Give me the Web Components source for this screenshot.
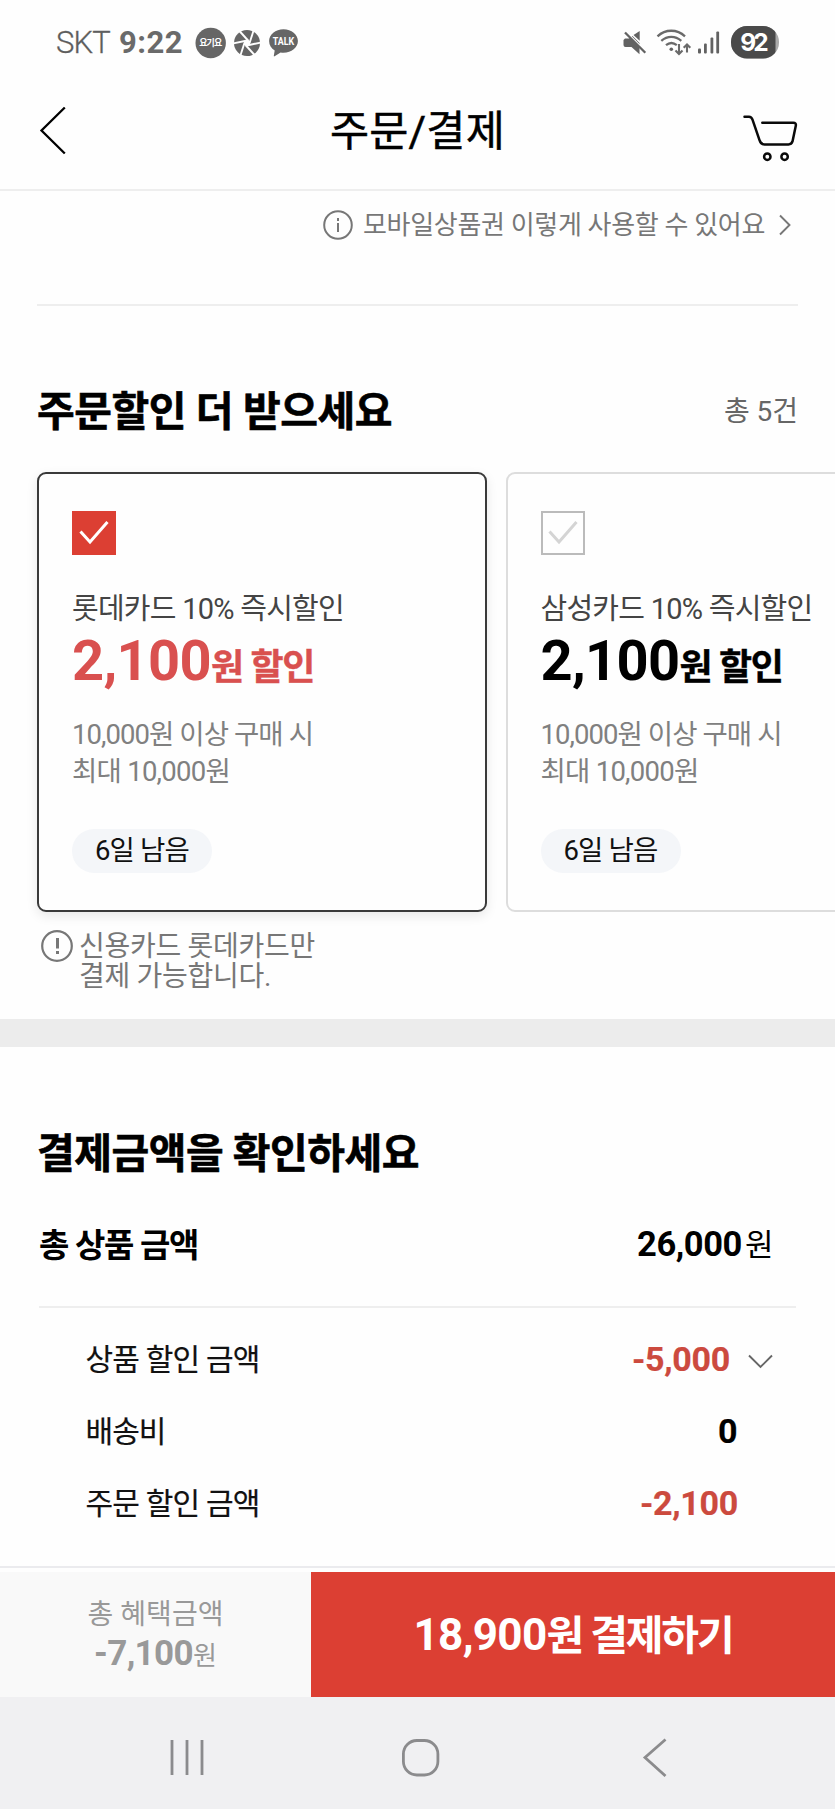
<!DOCTYPE html>
<html lang="ko">
<head>
<meta charset="utf-8">
<title>주문/결제</title>
<style>
  body { margin: 0; background: #fefefe; font-family: Roboto, "Noto Sans CJK KR", sans-serif; color: #111; }
</style>
</head>
<body>
<order-app></order-app>
<script>
const define = (name, html, init) => {
  const tpl = document.createElement('template');
  tpl.innerHTML = html;
  customElements.define(name, class extends HTMLElement {
    connectedCallback() {
      if (this.shadowRoot) return;
      this.attachShadow({ mode: 'open' }).appendChild(tpl.content.cloneNode(true));
      if (init) init(this);
    }
  });
};

define('order-app', `
  <style>
    :host { display: flex; flex-direction: column; width: 835px; height: 1809px; overflow: hidden; }
    .band { height: 28px; background: #ececec; flex: none; }
  </style>
  <status-bar></status-bar>
  <top-bar></top-bar>
  <voucher-link></voucher-link>
  <discount-section></discount-section>
  <div class="band"></div>
  <amount-section></amount-section>
  <pay-bar></pay-bar>
  <nav-bar></nav-bar>
`);

define('status-bar', `
  <style>
    :host { display: flex; justify-content: space-between; align-items: center; height: 85px; flex: none;
      box-sizing: border-box; padding: 0 56px 0 56px; color: #6d6d6d; font-size: 31px; line-height: 36px; }
    div { display: flex; align-items: center; }
    svg { display: block; flex: none; }
    .skt { font-weight: 300; margin-right: 9px; color: #5c5c5c; -webkit-text-stroke: .3px #666; }
    .time { font-weight: 700; margin-right: 11px; color: #6a6a6a; }
  </style>
  <div>
    <fit-text class="skt" w="54">SKT</fit-text>
    <fit-text class="time" w="64">9:22</fit-text>
    <svg width="104" height="36" viewBox="194 25 104 36">
      <circle cx="210.700" cy="43" r="15.200" fill="#666"/>
      <text x="210.700" y="46.300" text-anchor="middle" textLength="23" font-family="Noto Sans CJK KR" font-size="9" font-weight="700" fill="#fff">요기요</text>
      <circle cx="247" cy="43" r="13" fill="#666"/>
      <g stroke="#fefefe" stroke-width="1.900" fill="none">
        <path d="M239 30.500 248.500 41"/>
        <path d="M239 30.500 248.500 41" transform="rotate(60 247 43)"/>
        <path d="M239 30.500 248.500 41" transform="rotate(120 247 43)"/>
        <path d="M239 30.500 248.500 41" transform="rotate(180 247 43)"/>
        <path d="M239 30.500 248.500 41" transform="rotate(240 247 43)"/>
        <path d="M239 30.500 248.500 41" transform="rotate(300 247 43)"/>
      </g>
      <path d="M247 39.500 250 41.300v3.500L247 46.500 244 44.700V41.300Z" fill="#fefefe"/>
      <path d="M283.500 29.300c8 0 14.400 5.200 14.400 11.800s-6.400 11.700-14.400 11.700c-1 0-2-.1-2.900-.2l-6 3.700c-.6.300-.9 0-.8-.6l.9-5.200c-3.400-2-5.600-5.400-5.600-9.400 0-6.600 6.400-11.800 14.400-11.800Z" fill="#666"/>
      <text x="283.500" y="44.700" text-anchor="middle" textLength="21.500" lengthAdjust="spacingAndGlyphs" font-family="Roboto" font-size="10" font-weight="700" fill="#fff">TALK</text>
    </svg>
  </div>
  <div>
    <svg width="158" height="36" viewBox="621 25 158 36">
      <g fill="#626262">
        <path d="M625 38.500h4l3.500-2.500 7 7v11.200L631.500 47H625.500a2 2 0 0 1-2-2v-5Z"/>
        <path d="M633.500 35 639.700 31v9.700Z"/>
        <path d="M626.500 32.500 646.300 52.300" stroke="#fefefe" stroke-width="2" fill="none"/>
        <path d="M625 32.500 645.300 52.800" stroke="#626262" stroke-width="2.300" fill="none"/>
        <circle cx="671.300" cy="49.200" r="1.800"/>
        <rect x="698" y="48.500" width="3" height="5" rx="1"/><rect x="704" y="43.500" width="2.800" height="10" rx="1"/>
        <rect x="710.500" y="37.500" width="2.800" height="16" rx="1"/><rect x="716.300" y="31.500" width="2.800" height="22" rx="1"/>
      </g>
      <g fill="none" stroke="#6a6a6a" stroke-width="2.300">
        <path d="M657.500 36.300c8-7.400 19.500-7.400 27.500 0M661.300 40.800c6-5.300 14-5.300 20 0M666 45.200c3.300-2.700 7.500-2.700 10.800 0"/>
        <path d="M679 44v9.500M675.500 50.500l3.500 3.500 3.500-3.500M687 52.500v-8M683.700 47.800l3.300-3.300 3.300 3.300" stroke-width="2.100"/>
      </g>
      <clipPath id="cell"><rect x="731" y="26" width="48" height="32.500" rx="16"/></clipPath>
      <g clip-path="url(#cell)">
        <rect x="731" y="26" width="48" height="33" fill="#aaa"/>
        <rect x="731" y="26" width="44.500" height="33" fill="#4a4a4a"/>
      </g>
      <text x="754.500" y="51" text-anchor="middle" textLength="28.500" font-family="Inter" font-size="24.500" font-weight="700" fill="#fff">92</text>
    </svg>
  </div>
`);

define('top-bar', `
  <style>
    :host { display: grid; grid-template-columns: 60px 1fr 60px; align-items: center; height: 106px; flex: none;
      box-sizing: border-box; padding: 0 36px; border-bottom: 2.500px solid #eee; }
    h1 { margin: 0 0 10px; font-size: 42.500px; line-height: 50px; font-weight: 400; color: #000; text-align: center; -webkit-text-stroke: .5px #000; }
    svg { display: block; }
    .back { margin-bottom: 4px; }
    .cart { margin-top: 4px; }
  </style>
  <svg class="back" width="40" height="60" viewBox="36 105 40 60"><path d="M64.800 107.500 41.500 130.500 64.800 153.500" fill="none" stroke="#000" stroke-width="2.300"/></svg>
  <h1><fit-text w="175">주문/결제</fit-text></h1>
  <svg class="cart" width="60" height="60" viewBox="739 109 60 60" fill="none" stroke="#0a0a0a" stroke-width="2.500" stroke-linecap="round" stroke-linejoin="round">
    <path d="M744.500 116.700h4.500q2.500 0 3.500 3l7 20.500q1.300 4.200 5 4.200h24q3 0 4-3l3.300-15.700q.6-3-2.500-3h-31"/>
    <circle cx="767.300" cy="156.700" r="3.200"/><circle cx="784.600" cy="156.700" r="3.200"/>
  </svg>
`);

define('voucher-link', `
  <style>
    :host { display: flex; flex-direction: column; flex: none; height: 115px; box-sizing: border-box; margin: 0 37px; border-bottom: 2px solid #eee; }
    a { display: flex; align-items: center; justify-content: flex-end; margin-top: 16px; height: 36px; color: #777; font-size: 26px; line-height: 36px; }
    .i { margin-right: 10px; } .c { margin: 0 7px 0 14px; }
    svg { display: block; }
  </style>
  <a>
    <svg class="i" width="30" height="30" viewBox="0 0 30 30" fill="none" stroke="#777" stroke-width="2"><circle cx="15" cy="15" r="13.800"/><path d="M15 13v9M15 8v3"/></svg>
    <fit-text w="402">모바일상품권 이렇게 사용할 수 있어요</fit-text>
    <svg class="c" width="12" height="22" viewBox="0 0 12 22" fill="none" stroke="#777" stroke-width="1.900"><path d="M1 1.500 10.500 11 1 20.500"/></svg>
  </a>
`);

define('discount-section', `
  <style>
    :host { display: block; flex: none; height: 713px; box-sizing: border-box; padding: 81px 0 0 37px; }
    header { display: flex; justify-content: space-between; align-items: center; height: 50px; margin: 0 37px 35px 0; }
    h2 { margin: 0; font-size: 41px; line-height: 50px; font-weight: 700; color: #000; -webkit-text-stroke: .6px #000; }
    .n { font-size: 28px; line-height: 40px; color: #666; }
    .cards { display: flex; gap: 19px; overflow: visible; }
    .note { display: flex; gap: 6px; margin: 18px 0 0 4px; color: #777; font-size: 28px; line-height: 30px; }
    .note svg { display: block; flex: none; }
    .note p { margin: 2px 0 0; display: flex; flex-direction: column; align-items: flex-start; }
  </style>
  <header><h2><fit-text w="355">주문할인 더 받으세요</fit-text></h2><fit-text class="n" w="74">총 5건</fit-text></header>
  <div class="cards">
    <coupon-card checked><fit-text w="272">롯데카드 10% 즉시할인</fit-text></coupon-card>
    <coupon-card><fit-text w="272">삼성카드 10% 즉시할인</fit-text></coupon-card>
  </div>
  <div class="note">
    <svg width="32" height="32" viewBox="0 0 32 32" fill="none" stroke="#777" stroke-width="2.200"><circle cx="16" cy="16" r="14.800"/><path d="M16.500 8v10.500M16.500 21v3" stroke-width="3"/></svg>
    <p><fit-text w="236">신용카드 롯데카드만</fit-text><fit-text w="192">결제 가능합니다.</fit-text></p>
  </div>
`);

define('coupon-card', `
  <style>
    :host { display: block; flex: none; width: 450px; height: 440px; box-sizing: border-box; border: 2px solid #ddd; border-radius: 9px;
      padding: 37px 0 0 32.500px; background: #fefefe; color: #444; --deal: #000; --box: transparent; --edge: #bbb; --tick: #d4d4d4; }
    :host([checked]) { border-color: #3a3a3a; padding-left: 33px; box-shadow: 0 4px 12px rgba(0,0,0,.09); --deal: #d9504f; --box: #dc3f33; --edge: #dc3f33; --tick: #fff; }
    svg { display: block; }
    .name { font-size: 29px; line-height: 40px; height: 40px; margin-top: 34px; }
    .deal { display: flex; align-items: baseline; height: 66px; line-height: 66px; color: var(--deal); font-weight: 700; margin-top: -1px; }
    .num { font-size: 56px; } .won { font-size: 36px; -webkit-text-stroke: .4px var(--deal); }
    .cond { display: flex; flex-direction: column; align-items: flex-start; margin-top: 22px; font-size: 27.500px; line-height: 37px; color: #808080; }
    .pill { display: flex; align-items: center; justify-content: center; width: 140px; height: 44px; margin-top: 39px; border-radius: 22px; background: #f4f6f9; font-size: 27.500px; line-height: 40px; color: #111; }
  </style>
  <svg width="44" height="44" viewBox="0 0 44 44"><rect x="1" y="1" width="42" height="42" fill="var(--box)" stroke="var(--edge)" stroke-width="2"/><path d="M8.500 20.500 18 31 35.500 11" fill="none" stroke="var(--tick)" stroke-width="3"/></svg>
  <div class="name"><slot></slot></div>
  <div class="deal"><fit-text class="num" w="139">2,100</fit-text><fit-text class="won" w="103">원 할인</fit-text></div>
  <div class="cond"><fit-text w="241">10,000원 이상 구매 시</fit-text><fit-text w="158">최대 10,000원</fit-text></div>
  <div class="pill"><fit-text w="94">6일 남음</fit-text></div>
`);

define('amount-section', `
  <style>
    :host { display: block; flex: none; height: 519px; box-sizing: border-box; padding: 82px 38px 0 37px; }
    h2 { margin: 0; font-size: 41px; line-height: 50px; font-weight: 700; color: #000; -webkit-text-stroke: .6px #000; }
    .total { display: flex; justify-content: space-between; align-items: center; height: 92px; margin-top: 20px; padding: 1px 24px 0 2px; box-sizing: border-box; font-weight: 700; font-size: 33px; line-height: 40px; color: #000; }
    .v { display: flex; align-items: baseline; gap: 3px; font-size: 34.500px; margin-top: -1px; }
    .v .w { font-weight: 400; font-size: 31px; }
    hr { border: 0; height: 2px; margin: 15px 1px 16px 2px; background: #eee; }
    svg { display: block; }
  </style>
  <h2><fit-text w="382">결제금액을 확인하세요</fit-text></h2>
  <div class="total"><fit-text w="159">총 상품 금액</fit-text><span class="v"><fit-text w="105">26,000</fit-text><fit-text class="w" w="28">원</fit-text></span></div>
  <hr>
  <amount-row end="24"><fit-text w="174">상품 할인 금액</fit-text><fit-text slot="value" w="98">-5,000</fit-text>
    <svg slot="value" width="25" height="16" viewBox="0 0 25 16" style="margin:7px 0 0 18px"><path d="M1 1.500 12.500 13 24 1.500" fill="none" stroke="#666" stroke-width="1.900"/></svg></amount-row>
  <amount-row end="59" plain><fit-text w="80">배송비</fit-text><fit-text slot="value" w="20">0</fit-text></amount-row>
  <amount-row end="59"><fit-text w="174">주문 할인 금액</fit-text><fit-text slot="value" w="98">-2,100</fit-text></amount-row>
`);

define('amount-row', `
  <style>
    :host { display: flex; justify-content: space-between; align-items: center; height: 72px; padding-left: 48.500px; font-size: 30px; line-height: 40px; color: #111; -webkit-text-stroke: .2px; }
    .value { display: flex; align-items: center; font-size: 34px; font-weight: 700; color: #cc4a3e; margin-top: -3px; }
    :host([plain]) .value { color: #000; }
  </style>
  <slot></slot><span class="value"><slot name="value"></slot></span>
`, el => { el.style.paddingRight = el.getAttribute('end') + 'px'; });

define('pay-bar', `
  <style>
    :host { display: flex; flex: none; height: 131px; box-sizing: border-box; border-top: 2px solid #ebebee; padding-top: 4px; }
    .sum { width: 311px; background: #f9f9f9; display: flex; flex-direction: column; align-items: center; color: #999; font-size: 28px; line-height: 40px; padding-top: 23px; box-sizing: border-box; }
    .sum div { display: flex; align-items: baseline; margin-top: -1px; }
    .sum b { font-size: 35px; } .sum .w { font-size: 26px; }
    .go { flex: 1; background: #dc3f33; color: #fff; font-weight: 700; display: flex; align-items: baseline; justify-content: center; line-height: 127px; height: 125px; }
  </style>
  <div class="sum"><fit-text w="136">총 혜택금액</fit-text><div><b><fit-text w="99">-7,100</fit-text></b><fit-text class="w" w="24">원</fit-text></div></div>
  <div class="go"><fit-text style="font-size:44px" w="133">18,900</fit-text><fit-text style="font-size:41px" w="186">원 결제하기</fit-text></div>
`);

define('nav-bar', `
  <style>
    :host { display: flex; flex: none; height: 112px; background: #f0f0f2; align-items: center; padding: 0 0 0 165px; }
    svg { display: block; margin-top: 9px; fill: none; stroke: #8b8b8d; stroke-width: 2.800; }
  </style>
  <svg width="44" height="44"><path d="M7 4v35M22 4v35M37 4v35"/></svg>
  <svg width="44" height="44" style="margin-left:190px"><rect x="4.400" y="4.500" width="34.500" height="34.500" rx="13.500"/></svg>
  <svg width="44" height="44" style="margin-left:195px"><path d="M27.500 3.500 7 21.500 27.500 40"/></svg>
`);

/* Text set to a given line length: the difference is spread over its letters. */
customElements.define('fit-text', class extends HTMLElement {
  connectedCallback() {
    if (this.shadowRoot) return;
    this.attachShadow({ mode: 'open' }).innerHTML =
      '<style>:host { display: inline-block; white-space: nowrap; flex: none; }</style><slot></slot>';
    const goal = parseFloat(this.getAttribute('w'));
    const count = [...this.textContent].length;
    const natural = this.getBoundingClientRect().width;
    if (natural) this.style.letterSpacing = ((goal - natural) / count).toFixed(3) + 'px';
  }
});
</script>
</body>
</html>
